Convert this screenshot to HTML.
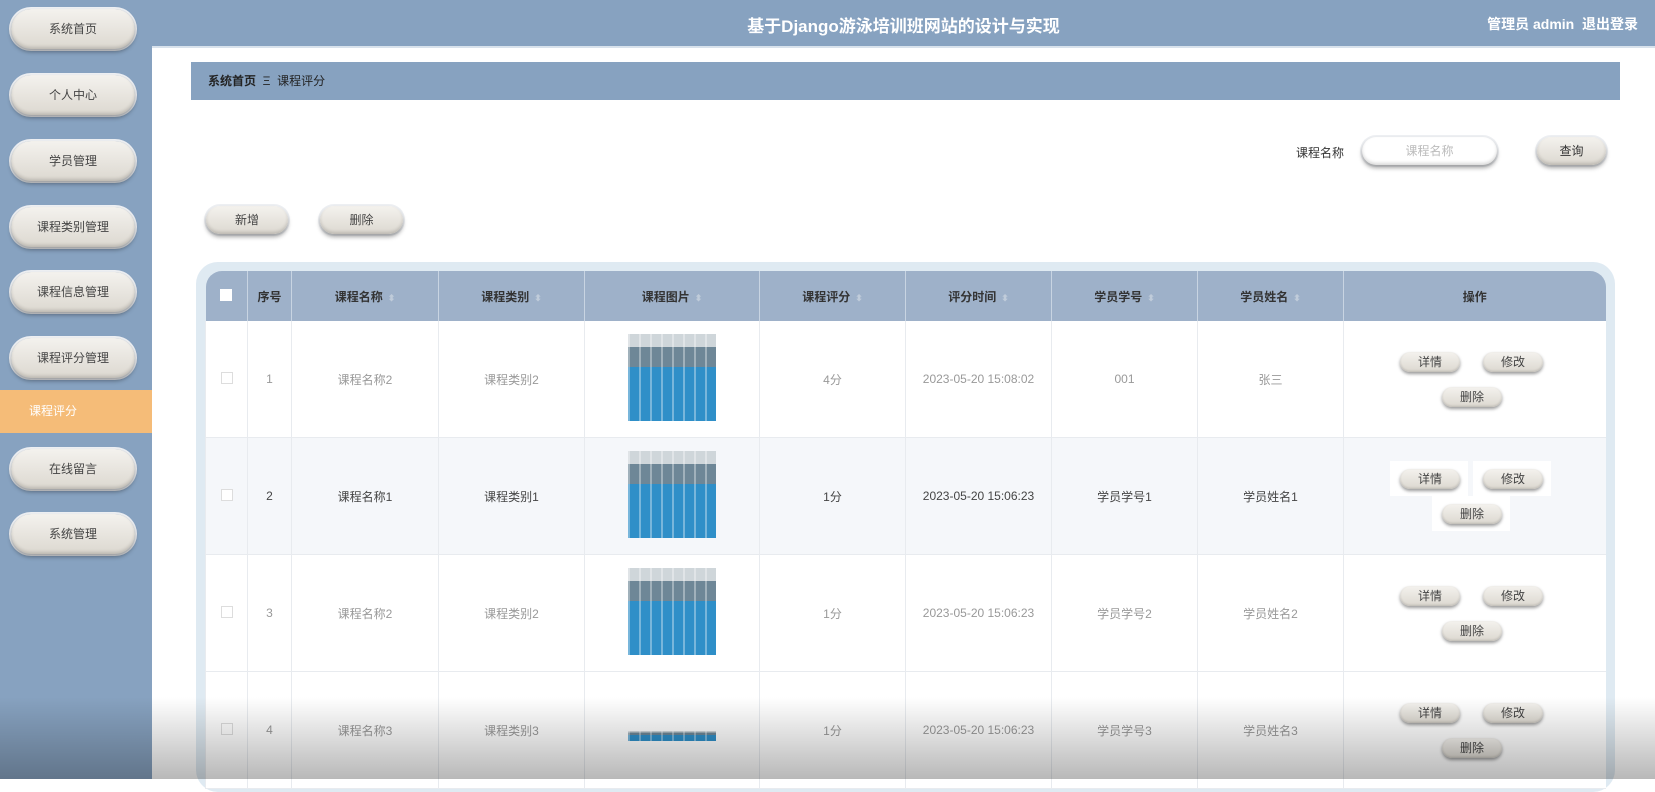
<!DOCTYPE html>
<html><head><meta charset="utf-8"><style>
*{margin:0;padding:0;box-sizing:border-box}
body{width:1655px;height:779px;overflow:hidden;background:#fff;font-family:"Liberation Sans","Noto Sans CJK SC",sans-serif;font-size:12px;color:#333;position:relative}
.side{position:absolute;left:0;top:0;width:152px;height:779px;background:#87a2c0}
.pill{position:absolute;border-radius:22px;background:linear-gradient(#f4f2ee,#dcd8d0);box-shadow:0 3px 4px rgba(0,0,0,.35),inset 0 -2px 3px rgba(0,0,0,.15),0 0 0 2px #eef0f3;text-align:center;color:#444}
.side .pill{left:11px;width:124px;height:40px;line-height:40px;font-size:12px}
.active{position:absolute;left:0;top:390px;width:152px;height:43px;background:#f5bc78;color:#fff;line-height:43px;padding-left:29px;font-size:12px}
.top{position:absolute;left:152px;top:0;right:0;height:48px;background:#87a2c0;border-bottom:2px solid #d8e2ec}
.title{position:absolute;left:0;right:0;top:12px;text-align:center;color:#fff;font-weight:bold;font-size:17px}
.user{position:absolute;right:17px;top:14px;color:#fff;font-weight:bold;font-size:14px}
.crumb{position:absolute;left:191px;top:62px;width:1429px;height:38px;background:#87a2c0;line-height:38px;padding-left:17px;font-size:12px;color:#222}
.sm{font-size:12px;height:28px;line-height:28px}
.box{position:absolute;left:196px;top:262px;width:1419px;height:530px;background:#dfeaf2;border-radius:22px}
table{position:absolute;left:205px;top:271px;width:1400px;border-collapse:collapse;table-layout:fixed}
th{background:#9eb1c9;height:50px;font-weight:bold;color:#333;border-left:1px solid #c8d4e2;font-size:12px}
th:first-child{border-radius:16px 0 0 0;border-left:none}
th:last-child{border-radius:0 16px 0 0}
td{height:116px;text-align:center;color:#999;border-left:1px solid #e8ebef;border-bottom:1px solid #e8ebef;background:#fff;font-size:12px}
tr.h td{background:#f5f7fa;color:#444}
.cb{display:inline-block;width:12px;height:12px;border:1px solid #ddd;background:#fff}
th .cb{border-color:#fff}
.ar{color:#c0ccda;font-size:9px;margin-left:5px}
.img{display:inline-block;width:88px;height:87px;background:repeating-linear-gradient(90deg,rgba(255,255,255,.35) 0 2px,transparent 2px 11px),linear-gradient(#cfd6da 0 15%,#6e8797 15% 38%,#2f8fc8 38% 100%)}
.op{position:relative;height:116px}
.op .pill{width:60px;height:20px;line-height:20px;font-size:12px;box-shadow:0 2px 3px rgba(0,0,0,.4),inset 0 -1px 2px rgba(0,0,0,.15)}
.wb{position:absolute;background:#fff}
.fade{position:absolute;left:0;top:697px;width:1655px;height:82px;background:linear-gradient(rgba(0,0,0,0),rgba(0,0,0,.28))}
</style></head><body>
<div class="side">
<div class="pill" style="top:9px">系统首页</div>
<div class="pill" style="top:75px">个人中心</div>
<div class="pill" style="top:141px">学员管理</div>
<div class="pill" style="top:207px">课程类别管理</div>
<div class="pill" style="top:272px">课程信息管理</div>
<div class="pill" style="top:338px">课程评分管理</div>
<div class="active">课程评分</div>
<div class="pill" style="top:449px">在线留言</div>
<div class="pill" style="top:514px">系统管理</div>
</div>
<div class="top"><div class="title">基于Django游泳培训班网站的设计与实现</div><div class="user">管理员 admin &nbsp;退出登录</div></div>
<div class="crumb"><b>系统首页</b> &nbsp;Ξ&nbsp; 课程评分</div>
<div style="position:absolute;left:1296px;top:144px;font-size:12px">课程名称</div>
<div class="pill sm" style="left:1362px;top:137px;width:135px;background:#fff;color:#bbb">课程名称</div>
<div class="pill sm" style="left:1537px;top:137px;width:69px;color:#333">查询</div>
<div class="pill sm" style="left:206px;top:206px;width:82px">新增</div>
<div class="pill sm" style="left:320px;top:206px;width:83px">删除</div>
<div class="box"></div>
<table>
<colgroup><col style="width:42px"><col style="width:44px"><col style="width:147px"><col style="width:146px"><col style="width:175px"><col style="width:146px"><col style="width:146px"><col style="width:146px"><col style="width:146px"><col style="width:262px"></colgroup>
<tr><th><span class="cb"></span></th><th>序号</th><th>课程名称<span class="ar">⬍</span></th><th>课程类别<span class="ar">⬍</span></th><th>课程图片<span class="ar">⬍</span></th><th>课程评分<span class="ar">⬍</span></th><th>评分时间<span class="ar">⬍</span></th><th>学员学号<span class="ar">⬍</span></th><th>学员姓名<span class="ar">⬍</span></th><th>操作</th></tr>
<tr><td><span class="cb"></span></td><td>1</td><td>课程名称2</td><td>课程类别2</td><td><span class="img"></span></td><td>4分</td><td>2023-05-20 15:08:02</td><td>001</td><td>张三</td><td><div class="op"><div class="pill" style="left:56px;top:31px">详情</div><div class="pill" style="left:139px;top:31px">修改</div><div class="pill" style="left:98px;top:66px">删除</div></div></td></tr>
<tr class="h"><td><span class="cb"></span></td><td>2</td><td>课程名称1</td><td>课程类别1</td><td><span class="img"></span></td><td>1分</td><td>2023-05-20 15:06:23</td><td>学员学号1</td><td>学员姓名1</td><td><div class="op"><div class="wb" style="left:46px;top:23px;width:78px;height:35px"></div><div class="wb" style="left:129px;top:23px;width:78px;height:35px"></div><div class="wb" style="left:88px;top:58px;width:78px;height:35px"></div><div class="pill" style="left:56px;top:31px">详情</div><div class="pill" style="left:139px;top:31px">修改</div><div class="pill" style="left:98px;top:66px">删除</div></div></td></tr>
<tr><td><span class="cb"></span></td><td>3</td><td>课程名称2</td><td>课程类别2</td><td><span class="img"></span></td><td>1分</td><td>2023-05-20 15:06:23</td><td>学员学号2</td><td>学员姓名2</td><td><div class="op"><div class="pill" style="left:56px;top:31px">详情</div><div class="pill" style="left:139px;top:31px">修改</div><div class="pill" style="left:98px;top:66px">删除</div></div></td></tr>
<tr><td><span class="cb"></span></td><td>4</td><td>课程名称3</td><td>课程类别3</td><td><span class="img" style="height:10px;vertical-align:top;margin-top:11px"></span></td><td>1分</td><td>2023-05-20 15:06:23</td><td>学员学号3</td><td>学员姓名3</td><td><div class="op"><div class="pill" style="left:56px;top:31px">详情</div><div class="pill" style="left:139px;top:31px">修改</div><div class="pill" style="left:98px;top:66px">删除</div></div></td></tr>
</table>
<div class="fade"></div>
</body></html>
